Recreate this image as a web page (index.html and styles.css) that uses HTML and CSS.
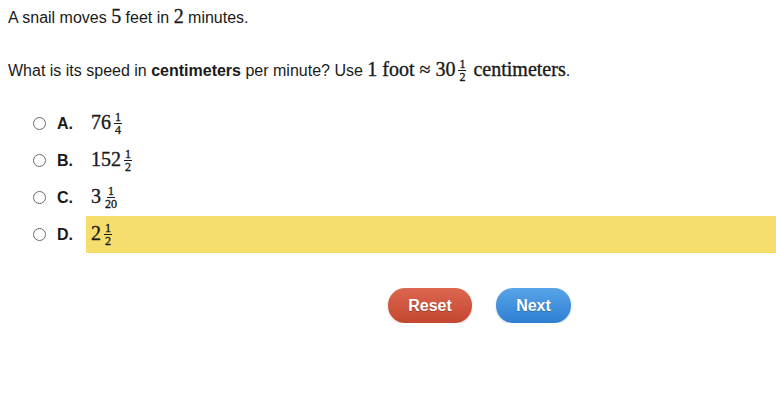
FILE: index.html
```html
<!DOCTYPE html>
<html>
<head>
<meta charset="utf-8">
<link rel="stylesheet" href="styles.css">
</head>
<body>
<div class="q1">A snail moves <span class="m">5</span> feet in <span class="m">2</span> minutes.</div>
<div class="q2">What is its speed in <b>centimeters</b> per minute? Use <span class="m">1 foot ≈ 30<span class="frac"><span class="num">1</span><span class="den">2</span></span> centimeters</span>.</div>
<div class="options">
  <div class="opt"><span class="radio"></span><span class="lab">A.</span><span class="ans"><span class="m">76<span class="frac"><span class="num">1</span><span class="den">4</span></span></span></span></div>
  <div class="opt"><span class="radio"></span><span class="lab">B.</span><span class="ans"><span class="m">152<span class="frac"><span class="num">1</span><span class="den">2</span></span></span></span></div>
  <div class="opt"><span class="radio"></span><span class="lab">C.</span><span class="ans"><span class="m">3<span class="frac"><span class="num">1</span><span class="den">20</span></span></span></span></div>
  <div class="opt"><span class="radio"></span><span class="lab">D.</span><span class="ans hl"><span class="m">2<span class="frac"><span class="num">1</span><span class="den">2</span></span></span></span></div>
</div>
<div class="buttons">
  <button class="btn reset">Reset</button>
  <button class="btn next">Next</button>
</div>
</body>
</html>
```
FILE: styles.css
```css
body {
  margin: 8px 0 8px 8px;
  font-family: "Liberation Sans", Arial, sans-serif;
  font-size: 16px;
  color: #1a1a1a;
}
.m {
  font-family: "Liberation Serif", "Times New Roman", serif;
  font-size: 20px;
  -webkit-text-stroke: 0.35px #1a1a1a;
}
.frac {
  display: inline-flex;
  flex-direction: column;
  align-items: center;
  vertical-align: middle;
  font-size: 12px;
  line-height: 10px;
  margin: 0 2px 0 3px;
  position: relative;
  top: -1px;
}
.frac .num {
  padding: 0 1px 1px;
  border-bottom: 1px solid #1a1a1a;
}
.frac .den { padding: 1px 1px 0; }
.q1 {
  height: 17px;
  line-height: 17px;
}
.q2 {
  margin-top: 34px;
  height: 22px;
  line-height: 20px;
}
.q2 b { font-weight: bold; }
.options {
  margin-top: 24px;
}
.opt {
  height: 37px;
  display: flex;
  align-items: stretch;
}
.radio {
  align-self: center;
  width: 11px;
  height: 11px;
  border: 1px solid #6b6b6b;
  border-radius: 50%;
  margin-left: 25px;
  box-sizing: content-box;
}
.lab {
  display: flex;
  align-items: center;
  font-weight: bold;
  margin-left: 11px;
  width: 29px;
}
.ans {
  flex: 1;
  display: flex;
  align-items: center;
  padding-left: 5px;
}
.hl { background: #f6de6c; }
.buttons {
  margin-top: 35px;
  display: flex;
  gap: 24px;
  padding-left: 380px;
}
.btn {
  height: 35px;
  border: none;
  border-radius: 17px;
  color: #fff;
  font-family: "Liberation Sans", Arial, sans-serif;
  font-weight: bold;
  font-size: 16px;
  padding: 0;
  text-shadow: 0 1px 1px rgba(0,0,0,0.25);
  box-shadow: 0 1px 2px rgba(0,0,0,0.2);
}
.reset {
  width: 84px;
  background: linear-gradient(#dc6650, #c4472f);
}
.next {
  width: 75px;
  background: linear-gradient(#58a4e8, #2f7fd2);
}
```
